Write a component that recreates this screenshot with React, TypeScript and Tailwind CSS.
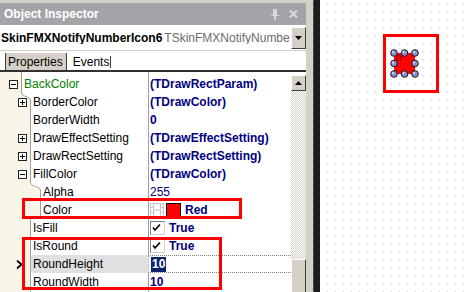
import React from "react";

type RowDef = {
  name: string;
  gutter: string;
  indent: number;
  exp?: "plus" | "minus";
  value?: string;
  kind?: "text" | "plain" | "color" | "check" | "selected";
  green?: boolean;
  curveFrom?: number;
  selected?: boolean;
  arrow?: boolean;
};

const rows: RowDef[] = [
  { name: "BackColor", gutter: "w-[21px]", indent: 21, exp: "minus", value: "(TDrawRectParam)", kind: "text", green: true },
  { name: "BorderColor", gutter: "w-[30px]", indent: 30, exp: "plus", value: "(TDrawColor)", kind: "text", curveFrom: 21 },
  { name: "BorderWidth", gutter: "w-[30px]", indent: 30, value: "0", kind: "text" },
  { name: "DrawEffectSetting", gutter: "w-[30px]", indent: 30, exp: "plus", value: "(TDrawEffectSetting)", kind: "text" },
  { name: "DrawRectSetting", gutter: "w-[30px]", indent: 30, exp: "plus", value: "(TDrawRectSetting)", kind: "text" },
  { name: "FillColor", gutter: "w-[30px]", indent: 30, exp: "minus", value: "(TDrawColor)", kind: "text" },
  { name: "Alpha", gutter: "w-[40px]", indent: 40, value: "255", kind: "plain", curveFrom: 30 },
  { name: "Color", gutter: "w-[40px]", indent: 40, value: "Red", kind: "color" },
  { name: "IsFill", gutter: "w-[30px]", indent: 30, value: "True", kind: "check" },
  { name: "IsRound", gutter: "w-[30px]", indent: 30, value: "True", kind: "check" },
  { name: "RoundHeight", gutter: "w-[30px]", indent: 30, value: "10", kind: "selected", selected: true, arrow: true },
  { name: "RoundWidth", gutter: "w-[30px]", indent: 30, value: "10", kind: "text" },
];

function Expander({ type }: { type: "plus" | "minus" }) {
  return (
    <svg width="9" height="9" viewBox="0 0 9 9" className="block">
      <rect x="0.5" y="0.5" width="8" height="8" fill="#ffffff" stroke="#222222" />
      <path d="M2 4.5H7" stroke="#000000" strokeWidth="1" />
      {type === "plus" && <path d="M4.5 2V7" stroke="#000000" strokeWidth="1" />}
    </svg>
  );
}

function Curve({ from, to }: { from: number; to: number }) {
  const p = from + 0.5;
  const i = to + 0.5;
  return (
    <svg width={to + 1} height="8" className="absolute left-0 top-0 overflow-visible">
      <path d={`M${p} 0 C${p} 5 ${i} 2 ${i} 7 L${to + 1} 7 L${to + 1} 0 Z`} fill="#ffffff" />
      <path d={`M${p} -1 C${p} 5 ${i} 2 ${i} 8`} fill="none" stroke="#a0a0a0" strokeWidth="1" />
    </svg>
  );
}

function FilmIcon() {
  return (
    <svg width="14" height="14" viewBox="0 0 14 14" className="block">
      <rect x="0.5" y="0.5" width="3" height="13" fill="#ffffff" stroke="#c4c4c4" />
      <rect x="10.5" y="0.5" width="3" height="13" fill="#ffffff" stroke="#c4c4c4" />
      <path d="M1 4.5H3M1 9.5H3M11 4.5H13M11 9.5H13" stroke="#c4c4c4" />
      <path d="M3.5 0.5H10.5M3.5 7H10.5M3.5 13.5H10.5" stroke="#c4c4c4" />
    </svg>
  );
}

function CheckBox() {
  return (
    <div className="w-[15px] h-[14px] border-l border-t border-[#808080] border-r border-b border-r-[#d4d0c8] border-b-[#d4d0c8] bg-white flex items-center justify-center">
      <svg width="9" height="8" viewBox="0 0 9 8" className="block -ml-[2px]">
        <path d="M1 3.5L3 6L8 0.5" fill="none" stroke="#000000" strokeWidth="1.6" />
      </svg>
    </div>
  );
}

function Value({ r }: { r: RowDef }) {
  if (r.kind === "plain") {
    return <span className="text-[#000080]">{r.value}</span>;
  }
  if (r.kind === "color") {
    return (
      <div className="flex items-center">
        <FilmIcon />
        <div className="ml-[2px] w-[15px] h-[14px] bg-[#ff0000] border border-black" />
        <span className="ml-[4px] font-bold text-[#000080]">{r.value}</span>
      </div>
    );
  }
  if (r.kind === "check") {
    return (
      <div className="flex items-center">
        <CheckBox />
        <span className="ml-[4px] font-bold text-[#000080]">{r.value}</span>
      </div>
    );
  }
  if (r.kind === "selected") {
    return (
      <span className="ml-[1px] px-[1px] leading-[15px] bg-[#0a246a] text-white font-bold">{r.value}</span>
    );
  }
  return <span className="font-bold text-[#000080]">{r.value}</span>;
}

function Row({ r }: { r: RowDef }) {
  return (
    <div className="flex h-[18px] shrink-0">
      <div
        className={`relative shrink-0 bg-[#f9f5e9] flex items-center ${r.gutter} ${
          r.arrow ? "justify-start pl-[16px]" : "justify-end pr-[3px]"
        }`}
      >
        {r.exp && <Expander type={r.exp} />}
        {r.arrow && (
          <svg width="7" height="9" viewBox="0 0 7 9" className="block">
            <path d="M1 0.5L5.5 4.5L1 8.5" fill="none" stroke="#000000" strokeWidth="1.8" />
          </svg>
        )}
        {r.curveFrom !== undefined && <Curve from={r.curveFrom} to={r.indent} />}
      </div>
      <div
        className={`flex-1 flex items-center border-l border-[#a0a0a0] pl-[2px] whitespace-nowrap overflow-hidden ${
          r.selected ? "bg-[#e0e0e0]" : "bg-white"
        } ${r.green ? "text-[#008000]" : "text-black"}`}
      >
        {r.name}
      </div>
      <div
        className={`w-[143px] shrink-0 flex items-center border-l border-[#a0a0a0] pl-[1px] whitespace-nowrap overflow-hidden bg-white ${
          r.selected ? "border-y border-y-[#808080] border-dotted" : ""
        }`}
      >
        <Value r={r} />
      </div>
    </div>
  );
}

function Handle({ cx, cy }: { cx: number; cy: number }) {
  return (
    <g>
      <circle cx={cx} cy={cy} r="3.3" fill="#8c8cd0" stroke="#1a1a1a" strokeWidth="1" />
      <circle cx={cx - 1} cy={cy - 1} r="1" fill="#ffffff" opacity="0.8" />
    </g>
  );
}

export default function App() {
  return (
    <div className="relative flex w-[467px] h-[292px] overflow-hidden bg-white font-['Liberation_Sans',Arial,sans-serif] text-[12px] leading-none">
      {/* Object Inspector panel */}
      <div className="flex flex-col w-[306px] shrink-0 bg-[#d4d0c8]">
        <div className="h-[3px] shrink-0" />
        {/* Title bar */}
        <div className="h-[22px] shrink-0 bg-[#a4a4a8] flex items-center justify-between pl-[4px] pr-[8px]">
          <span className="font-bold text-white text-[12px]">Object Inspector</span>
          <div className="flex items-center gap-[10px]">
            <svg width="8" height="11" viewBox="0 0 8 11" className="block">
              <rect x="2" y="0" width="4" height="6" fill="#d8d8d8" />
              <rect x="0" y="6" width="8" height="1" fill="#d8d8d8" />
              <rect x="3" y="7" width="2" height="4" fill="#d8d8d8" />
            </svg>
            <svg width="9" height="8" viewBox="0 0 9 8" className="block">
              <path d="M1 0.5L8 7.5M8 0.5L1 7.5" stroke="#d8d8d8" strokeWidth="2.2" />
            </svg>
          </div>
        </div>
        {/* Combo */}
        <div className="h-[25px] shrink-0 bg-white flex items-center">
          <div className="flex-1 flex items-center overflow-hidden whitespace-nowrap pl-[1px]">
            <span className="font-bold text-black">SkinFMXNotifyNumberIcon6</span>
            <span className="ml-[2px] text-[#6c6c6c]">TSkinFMXNotifyNumbe</span>
          </div>
          <div className="w-[15px] h-[22px] shrink-0 bg-[#d4d0c8] border-t border-l border-white border-r border-b border-r-[#404040] border-b-[#404040] flex items-center justify-center">
            <svg width="7" height="4" viewBox="0 0 7 4" className="block">
              <path d="M0 0H7L3.5 4Z" fill="#000000" />
            </svg>
          </div>
        </div>
        <div className="h-[1px] shrink-0 bg-[#d4d0c8]" />
        {/* Tabs */}
        <div className="h-[19px] shrink-0 bg-white flex items-end pl-[5px]">
          <div className="h-[17px] bg-[#d4d0c8] border-l border-r border-[#404040] pl-[2px] pr-[3px] flex items-center">
            Properties
          </div>
          <div className="h-[17px] flex items-center pl-[6px]">
            <span>Events</span>
            <div className="ml-[1px] w-[1px] h-[12px] bg-[#404040]" />
          </div>
        </div>
        <div className="h-[2px] shrink-0 bg-[#303030]" />
        {/* Grid */}
        <div className="flex-1 flex min-h-0">
          <div className="w-[291px] shrink-0 flex flex-col bg-white overflow-hidden">
            <div className="flex h-[3px] shrink-0">
              <div className="w-[21px] shrink-0 bg-[#f9f5e9]" />
              <div className="flex-1 border-l border-[#a0a0a0] bg-white" />
              <div className="w-[143px] shrink-0 border-l border-[#a0a0a0]" />
            </div>
            {rows.map((r) => (
              <Row key={r.name} r={r} />
            ))}
            <div className="flex flex-1">
              <div className="w-[30px] shrink-0 bg-[#f9f5e9]" />
              <div className="flex-1 border-l border-[#a0a0a0] bg-white" />
              <div className="w-[143px] shrink-0 border-l border-[#a0a0a0]" />
            </div>
          </div>
          {/* Scrollbar */}
          <div className="w-[15px] shrink-0 flex flex-col bg-white">
            <div className="h-[3px] shrink-0" />
            <div className="h-[16px] shrink-0 bg-[#d4d0c8] border-t border-l border-white border-r border-b border-r-[#404040] border-b-[#404040] flex items-center justify-center">
              <svg width="7" height="4" viewBox="0 0 7 4" className="block">
                <path d="M0 4H7L3.5 0Z" fill="#000000" />
              </svg>
            </div>
            <div className="flex-1 bg-[repeating-conic-gradient(#d4d0c8_0%_25%,#ffffff_0%_50%)] bg-[length:2px_2px]" />
            <div className="h-[33px] shrink-0 bg-[#d4d0c8] border-t border-l border-white border-r border-r-[#404040]" />
          </div>
        </div>
      </div>
      {/* Splitter */}
      <div className="w-[7px] shrink-0 bg-[#d4d0c8]" />
      <div className="w-[7px] shrink-0 bg-[#1c1c1c] border-l border-dotted border-[#777777]" />
      {/* Designer */}
      <div className="flex-1 bg-white bg-[radial-gradient(circle,#cfcfcf_0.5px,transparent_0.9px)] bg-[length:8px_8px] bg-[position:3px_0px]" />

      {/* Designer component */}
      <svg width="30" height="30" viewBox="0 0 30 30" className="absolute left-[390px] top-[49px]">
        <rect x="4" y="4" width="21" height="21" fill="#ff0000" />
        <circle cx="9" cy="9" r="2.5" fill="none" stroke="#600000" strokeWidth="0.8" />
        <Handle cx={4} cy={4} />
        <Handle cx={14.5} cy={4} />
        <Handle cx={25} cy={4} />
        <Handle cx={4} cy={14.5} />
        <Handle cx={25} cy={14.5} />
        <Handle cx={4} cy={25} />
        <Handle cx={14.5} cy={25} />
        <Handle cx={25} cy={25} />
      </svg>

      {/* Red annotation boxes */}
      <div className="absolute left-[22px] top-[198px] w-[220px] h-[21px] border-[3px] border-[#ff0000]" />
      <div className="absolute left-[22px] top-[237px] w-[200px] h-[53px] border-[3px] border-[#ff0000]" />
      <div className="absolute left-[383px] top-[34px] w-[56px] h-[59px] border-[3px] border-[#ff0000]" />
    </div>
  );
}
